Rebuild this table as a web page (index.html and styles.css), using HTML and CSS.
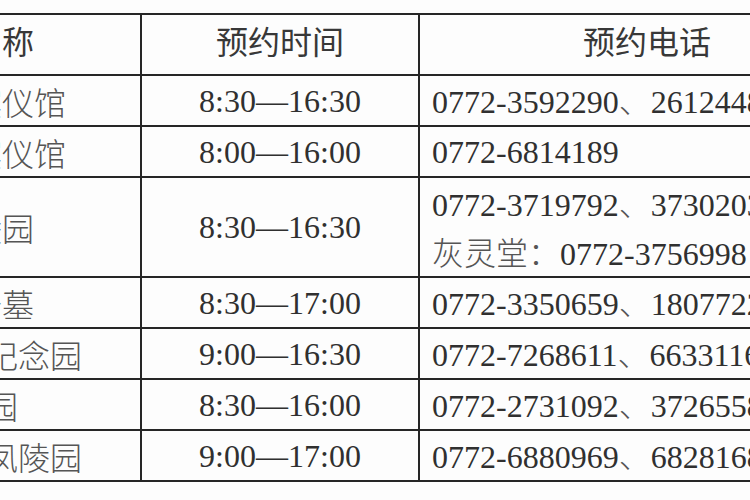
FILE: index.html
```html
<!DOCTYPE html>
<html lang="zh-CN">
<head>
<meta charset="utf-8">
<title>预约时间</title>
<link rel="stylesheet" href="styles.css">
</head>
<body>
<div class="page">
  <table class="sched">
    <colgroup>
      <col class="c-name">
      <col class="c-time">
      <col class="c-phone">
    </colgroup>
    <thead>
      <tr class="head">
        <th class="name">单位名称</th>
        <th class="time">预约时间</th>
        <th class="phone-h">预约电话</th>
      </tr>
    </thead>
    <tbody>
      <tr>
        <td class="name">柳州市殡仪馆</td>
        <td class="time">8:30—16:30</td>
        <td class="phone">0772-3592290<span class="cjk">、</span>2612448</td>
      </tr>
      <tr>
        <td class="name">柳江区殡仪馆</td>
        <td class="time">8:00—16:00</td>
        <td class="phone">0772-6814189</td>
      </tr>
      <tr class="double">
        <td class="name">鹤山陵园</td>
        <td class="time">8:30—16:30</td>
        <td class="phone">
          <div class="line">0772-3719792<span class="cjk">、</span>3730203</div>
          <div class="line"><span class="cjk">灰灵堂：</span>0772-3756998</div>
        </td>
      </tr>
      <tr>
        <td class="name">龙潭公墓</td>
        <td class="time">8:30—17:00</td>
        <td class="phone">0772-3350659<span class="cjk">、</span>18077228</td>
      </tr>
      <tr>
        <td class="name">柳州福寿纪念园</td>
        <td class="time">9:00—16:30</td>
        <td class="phone">0772-7268611<span class="cjk">、</span>6633116</td>
      </tr>
      <tr>
        <td class="name">福山园</td>
        <td class="time">8:30—16:00</td>
        <td class="phone">0772-2731092<span class="cjk">、</span>3726558</td>
      </tr>
      <tr>
        <td class="name">柳城县金凤陵园</td>
        <td class="time">9:00—17:00</td>
        <td class="phone">0772-6880969<span class="cjk">、</span>6828168</td>
      </tr>
    </tbody>
  </table>
</div>
</body>
</html>
```
FILE: styles.css
```css
html, body {
  margin: 0;
  padding: 0;
  background: #fdfdfd;
  overflow: hidden;
}

.page {
  width: 750px;
  height: 500px;
  overflow: hidden;
  padding-top: 13px;
  box-sizing: border-box;
}

.sched {
  border-collapse: collapse;
  table-layout: fixed;
  width: 1076px;
  margin-left: -202px;
  font-family: "Liberation Serif", "Noto Sans CJK SC", serif;
  font-size: 32px;
  color: #303030;
}

.c-name { width: 342px; }
.c-time { width: 278px; }
.c-phone { width: 456px; }

.sched tr { height: 51px; }
.sched tr.head { height: 61px; }
.sched tr.double { height: 100px; }

.sched th,
.sched td {
  border: 2px solid #262626;
  padding: 0;
  line-height: 36px;
  white-space: nowrap;
  overflow: hidden;
  vertical-align: middle;
}

.sched th {
  font-family: "Noto Sans CJK SC", sans-serif;
  font-weight: 400;
  color: #383838;
  text-align: center;
  padding-bottom: 10px;
}

.sched td.name {
  font-family: "Noto Sans CJK SC", sans-serif;
  font-weight: 300;
  color: #555;
  text-align: center;
}

.sched td.time {
  text-align: center;
}

.sched td.phone {
  text-align: left;
  padding-left: 12px;
}

.sched td.phone .line {
  height: 49px;
  line-height: 49px;
  overflow: hidden;
}

.cjk {
  font-family: "Noto Sans CJK SC", sans-serif;
  font-weight: 300;
  color: #555;
}
```
